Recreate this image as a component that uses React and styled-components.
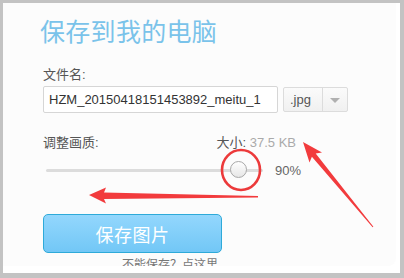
import styled, { createGlobalStyle } from "styled-components";

const GlobalStyle = createGlobalStyle`
  html, body {
    margin: 0;
    padding: 0;
    background: #fff;
  }
  body {
    font-family: "Liberation Sans", "Noto Sans CJK SC", sans-serif;
  }
`;

export default function App() {
  return (
    <Stage>
      <GlobalStyle />
      <Frame>
        <Panel>
          <Title>保存到我的电脑</Title>
          <Label>文件名:</Label>
          <FileRow>
            <NameInput value="HZM_20150418151453892_meitu_1" readOnly />
            <Select>
              <span className="value">.jpg</span>
              <span className="caret" />
            </Select>
          </FileRow>
          <QualityRow>
            <Label>调整画质:</Label>
            <Size>
              大小: <em>37.5 KB</em>
            </Size>
          </QualityRow>
          <SliderRow>
            <Track>
              <Thumb $left={184} />
            </Track>
            <Percent>90%</Percent>
          </SliderRow>
          <SaveButton>保存图片</SaveButton>
          <HelpLink>不能保存？点这里</HelpLink>
        </Panel>
      </Frame>
      <Marks width="404" height="278" viewBox="0 0 404 278">
        <ellipse cx="241" cy="170" rx="19" ry="20" fill="none" stroke="#ec3a3b" strokeWidth="2.6" />
        <polygon
          fill="#f23b3d"
          points="89,195 106,187.5 104,192.5 258,196 258,197.5 104,199 106,203.5"
        />
        <polygon
          fill="#f23b3d"
          points="303,142 322,152.5 315.7,153.5 373.4,226.7 372.6,227.3 311.9,156.7 309.5,162.5"
        />
      </Marks>
    </Stage>
  );
}

const Stage = styled.div`
  position: relative;
  width: 404px;
  height: 278px;
`;

const Frame = styled.div`
  box-sizing: border-box;
  width: 404px;
  height: 278px;
  border: solid #c3c3c3;
  border-width: 3px 4px 5px 3px;
  background: #fff;
`;

const Panel = styled.div`
  box-sizing: border-box;
  width: 393px;
  height: 263px;
  background: #fcfcfc;
  border-bottom-right-radius: 8px;
  overflow: hidden;
  padding: 14px 0 0 40px;
  display: flex;
  flex-direction: column;
  align-items: flex-start;

  > * {
    flex-shrink: 0;
  }
`;

const Title = styled.h1`
  margin: 0 0 20px -3px;
  font-size: 25px;
  line-height: 30px;
  font-weight: normal;
  color: #7ac3ea;
  letter-spacing: 0.3px;
`;

const Label = styled.div`
  font-size: 13px;
  line-height: 16px;
  color: #555;
`;

const FileRow = styled.div`
  display: flex;
  align-items: center;
  gap: 5px;
  margin-top: 3px;
`;

const NameInput = styled.input`
  box-sizing: border-box;
  width: 235px;
  height: 27px;
  border: 1px solid #d6d6d6;
  border-radius: 2px;
  background: #fff;
  padding: 0 0 0 5px;
  font-family: "Liberation Sans", sans-serif;
  font-size: 13px;
  color: #333;
  outline: none;
`;

const Select = styled.div`
  box-sizing: border-box;
  width: 65px;
  height: 25px;
  display: flex;
  border: 1px solid #dcdcdc;
  border-radius: 2px;
  background: linear-gradient(#fbfbfb, #f0f0f0);

  .value {
    width: 39px;
    border-right: 1px solid #dcdcdc;
    font-size: 13px;
    line-height: 23px;
    color: #555;
    padding-left: 6px;
    box-sizing: border-box;
  }
  .caret {
    flex: 1;
    display: flex;
    align-items: center;
    justify-content: center;
  }
  .caret::after {
    content: "";
    border-left: 5px solid transparent;
    border-right: 5px solid transparent;
    border-top: 5px solid #b0b0b0;
    margin-top: 1px;
  }
`;

const QualityRow = styled.div`
  display: flex;
  justify-content: space-between;
  align-items: center;
  width: 253px;
  margin-top: 22px;
`;

const Size = styled.div`
  font-size: 13px;
  line-height: 16px;
  color: #555;

  em {
    font-style: normal;
    color: #aaa;
  }
`;

const SliderRow = styled.div`
  display: flex;
  align-items: center;
  gap: 12px;
  height: 20px;
  margin-top: 9px;
  padding-left: 3px;
`;

const Track = styled.div`
  position: relative;
  width: 217px;
  height: 3px;
  background: #dcdcdc;
  border-radius: 2px;
`;

const Thumb = styled.span`
  position: absolute;
  top: -8px;
  left: ${(p) => p.$left}px;
  box-sizing: border-box;
  width: 17px;
  height: 17px;
  border-radius: 50%;
  border: 1px solid #a8a8a8;
  background: linear-gradient(#ffffff, #e6e6e6);
`;

const Percent = styled.span`
  font-size: 13px;
  color: #666;
`;

const SaveButton = styled.button`
  box-sizing: border-box;
  width: 179px;
  height: 39px;
  margin-top: 34px;
  border: 1px solid #2eaad9;
  border-radius: 5px;
  background: linear-gradient(#93d7fd, #72c7f6);
  color: #fff;
  font-family: "Noto Sans CJK SC", sans-serif;
  font-size: 18px;
  letter-spacing: 0.5px;
  padding: 0;
`;

const HelpLink = styled.div`
  margin: 4px 0 0 79px;
  font-size: 12px;
  line-height: 16px;
  color: #777;
`;

const Marks = styled.svg`
  position: absolute;
  left: 0;
  top: 0;
  pointer-events: none;
`;
